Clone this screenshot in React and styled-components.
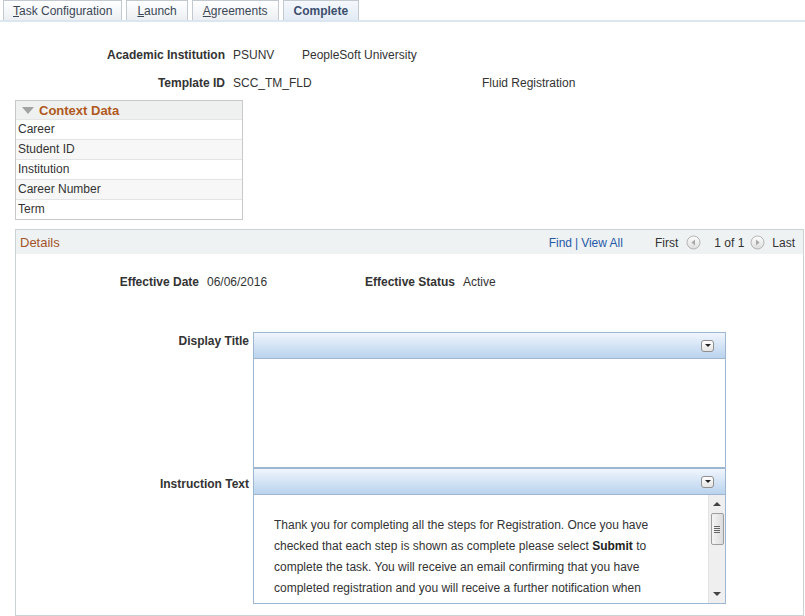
import React from 'react';
import styled, { createGlobalStyle } from 'styled-components';

const GlobalStyle = createGlobalStyle`
  body {
    margin: 0;
    background: #fff;
    font-family: "Liberation Sans", Arial, sans-serif;
    font-size: 12px;
    color: #333;
  }
`;

const Page = styled.div`
  width: 805px;
  height: 616px;
  overflow: hidden;
`;

// tabs
const TabBar = styled.div`
  display: flex;
  gap: 4px;
  padding-left: 3px;
  border-bottom: 2px solid #dce6f1;
`;

const Tab = styled.div`
  height: 20px;
  box-sizing: border-box;
  padding: 0 ${(p) => p.$pad}px;
  display: flex;
  align-items: center;
  border: 1px solid #c3c9d0;
  border-bottom: none;
  font-size: 12px;
  font-weight: ${(p) => (p.$active ? 'bold' : 'normal')};
  color: ${(p) => (p.$active ? '#3c4e6e' : '#3b4656')};
  background: ${(p) =>
    p.$active
      ? 'linear-gradient(#f5f8fc, #e2ebf5)'
      : 'linear-gradient(#ffffff, #eceff2)'};
  u {
    text-decoration: underline;
  }
`;

// header fields
const HeaderGrid = styled.div`
  display: grid;
  grid-template-columns: 233px 69px 180px auto;
  row-gap: 12px;
  padding-top: 25px;
  line-height: 16px;
`;

const Label = styled.div`
  font-weight: bold;
  text-align: right;
  padding-right: 8px;
  color: #333;
  white-space: nowrap;
`;

const Value = styled.div`
  color: #333;
  white-space: nowrap;
  grid-column: ${(p) => p.$span || 'auto'};
`;

// context data
const ContextBox = styled.div`
  margin: 9px 0 0 15px;
  width: 228px;
  box-sizing: border-box;
  border: 1px solid #c9c9c9;
`;

const ContextHeader = styled.div`
  height: 18px;
  display: flex;
  align-items: center;
  gap: 5px;
  padding-left: 6px;
  background: #eff1f1;
  font-size: 13px;
  font-weight: bold;
  color: #b0591d;
`;

const Caret = styled.span`
  width: 0;
  height: 0;
  border-left: 6px solid transparent;
  border-right: 6px solid transparent;
  border-top: 7px solid #a3a3a3;
`;

const ContextRow = styled.div`
  height: 19px;
  line-height: 19px;
  padding-left: 2px;
  border-top: 1px solid #e4e4e4;
  background: ${(p) => (p.$alt ? '#f7f7f7' : '#fff')};
`;

// details
const DetailsBox = styled.div`
  margin: 9px 0 0 15px;
  width: 789px;
  box-sizing: border-box;
  border: 1px solid #cdd2d5;
  padding-bottom: 11px;
`;

const DetailsHeader = styled.div`
  height: 24px;
  display: flex;
  align-items: center;
  padding: 1px 8px 0 4px;
  box-sizing: border-box;
  background: #eff2f3;
`;

const DetailsTitle = styled.div`
  font-size: 13px;
  color: #a4542a;
  flex: 1;
`;

const NavLink = styled.span`
  color: #2559a8;
  font-size: 12px;
`;

const Sep = styled.span`
  color: #2559a8;
  margin: 0 3px;
`;

const Pager = styled.div`
  display: flex;
  align-items: center;
  margin-left: 32px;
  color: #333;
`;

const PagerIcon = styled.svg`
  width: 15px;
  height: 15px;
  margin: 0 ${(p) => p.$right}px 0 ${(p) => p.$left}px;
  display: block;
`;

const EffGrid = styled.div`
  display: grid;
  grid-template-columns: 191px 150px 106px auto;
  padding-top: 20px;
  line-height: 16px;
`;

const FieldRow = styled.div`
  display: flex;
  align-items: flex-start;
  margin-top: ${(p) => p.$top}px;
`;

const FieldLabel = styled.div`
  width: 233px;
  text-align: right;
  font-weight: bold;
  line-height: 16px;
  padding-top: ${(p) => p.$offset}px;
  box-sizing: border-box;
  flex-shrink: 0;
`;

const Editor = styled.div`
  margin-left: 4px;
  width: 473px;
  box-sizing: border-box;
  border: 1px solid #9db6d1;
`;

const Toolbar = styled.div`
  height: 25px;
  display: flex;
  align-items: center;
  justify-content: flex-end;
  padding-right: 11px;
  background: linear-gradient(#f0f5fc, #b9d3ee);
  border-bottom: 1px solid #9db6d1;
`;

const DropButton = styled.div`
  width: 13px;
  height: 12px;
  box-sizing: border-box;
  border: 1px solid #8f8f8f;
  border-radius: 3px;
  background: linear-gradient(#ffffff, #e4e4e4);
  display: flex;
  align-items: center;
  justify-content: center;
  &::after {
    content: '';
    border-left: 3px solid transparent;
    border-right: 3px solid transparent;
    border-top: 3px solid #222;
  }
`;

const EditorBody = styled.div`
  height: ${(p) => p.$h}px;
  display: flex;
  overflow: hidden;
  background: #fff;
`;

const EditorText = styled.div`
  flex: 1;
  padding: 20px 35px 0 20px;
  line-height: 21px;
  color: #333;
  b {
    color: #222;
  }
`;

const ScrollTrack = styled.div`
  width: 16px;
  background: #efefef;
  border-left: 1px solid #e2e2e2;
  display: flex;
  flex-direction: column;
  align-items: center;
`;

const ScrollArrow = styled.div`
  height: 18px;
  display: flex;
  align-items: center;
  &::after {
    content: '';
    border-left: 4px solid transparent;
    border-right: 4px solid transparent;
    ${(p) =>
      p.$up ? 'border-bottom: 4px solid #444;' : 'border-top: 4px solid #444;'}
  }
`;

const ScrollThumb = styled.div`
  width: 13px;
  height: 32px;
  box-sizing: border-box;
  border: 1px solid #9e9e9e;
  border-radius: 2px;
  background: linear-gradient(90deg, #f4f4f4, #dcdcdc);
  display: flex;
  flex-direction: column;
  align-items: center;
  justify-content: center;
  gap: 1px;
  span {
    width: 6px;
    height: 1px;
    background: #666;
  }
`;

const ScrollSpace = styled.div`
  flex: 1;
`;

function PagerButton({ dir, left, right }) {
  return (
    <PagerIcon viewBox="0 0 15 15" $left={left} $right={right}>
      <defs>
        <linearGradient id={`pg-${dir}`} x1="0" y1="0" x2="0" y2="1">
          <stop offset="0" stopColor="#ffffff" />
          <stop offset="1" stopColor="#dcdcdc" />
        </linearGradient>
      </defs>
      <circle cx="7.5" cy="7.5" r="6.5" fill={`url(#pg-${dir})`} stroke="#b4b4b4" />
      {dir === 'prev' ? (
        <path d="M9 4.5 L5.5 7.5 L9 10.5 Z" fill="#a8a8a8" />
      ) : (
        <path d="M6 4.5 L9.5 7.5 L6 10.5 Z" fill="#a8a8a8" />
      )}
    </PagerIcon>
  );
}

const contextRows = ['Career', 'Student ID', 'Institution', 'Career Number', 'Term'];

export default function App() {
  return (
    <Page>
      <GlobalStyle />
      <TabBar>
        <Tab $pad={9}><span><u>T</u>ask Configuration</span></Tab>
        <Tab $pad={10}><span><u>L</u>aunch</span></Tab>
        <Tab $pad={10}><span><u>A</u>greements</span></Tab>
        <Tab $pad={10} $active>Complete</Tab>
      </TabBar>

      <HeaderGrid>
        <Label>Academic Institution</Label>
        <Value>PSUNV</Value>
        <Value $span="3 / 5">PeopleSoft University</Value>
        <Label>Template ID</Label>
        <Value $span="2 / 4">SCC_TM_FLD</Value>
        <Value>Fluid Registration</Value>
      </HeaderGrid>

      <ContextBox>
        <ContextHeader>
          <Caret />
          Context Data
        </ContextHeader>
        {contextRows.map((r, i) => (
          <ContextRow key={r} $alt={i % 2 === 1}>{r}</ContextRow>
        ))}
      </ContextBox>

      <DetailsBox>
        <DetailsHeader>
          <DetailsTitle>Details</DetailsTitle>
          <NavLink>Find</NavLink>
          <Sep>|</Sep>
          <NavLink>View All</NavLink>
          <Pager>
            <span>First</span>
            <PagerButton dir="prev" left={8} right={13} />
            <span>1 of 1</span>
            <PagerButton dir="next" left={6} right={7} />
            <span>Last</span>
          </Pager>
        </DetailsHeader>

        <EffGrid>
          <Label>Effective Date</Label>
          <Value>06/06/2016</Value>
          <Label>Effective Status</Label>
          <Value>Active</Value>
        </EffGrid>

        <FieldRow $top={42}>
          <FieldLabel $offset={1}>Display Title</FieldLabel>
          <Editor>
            <Toolbar><DropButton /></Toolbar>
            <EditorBody $h={108} />
          </Editor>
        </FieldRow>

        <FieldRow $top={0}>
          <FieldLabel $offset={8}>Instruction Text</FieldLabel>
          <Editor>
            <Toolbar><DropButton /></Toolbar>
            <EditorBody $h={108}>
              <EditorText>
                Thank you for completing all the steps for Registration. Once you have
                checked that each step is shown as complete please select <b>Submit</b> to
                complete the task. You will receive an email confirming that you have
                completed registration and you will receive a further notification when
              </EditorText>
              <ScrollTrack>
                <ScrollArrow $up />
                <ScrollThumb><span /><span /><span /><span /></ScrollThumb>
                <ScrollSpace />
                <ScrollArrow />
              </ScrollTrack>
            </EditorBody>
          </Editor>
        </FieldRow>
      </DetailsBox>
    </Page>
  );
}
